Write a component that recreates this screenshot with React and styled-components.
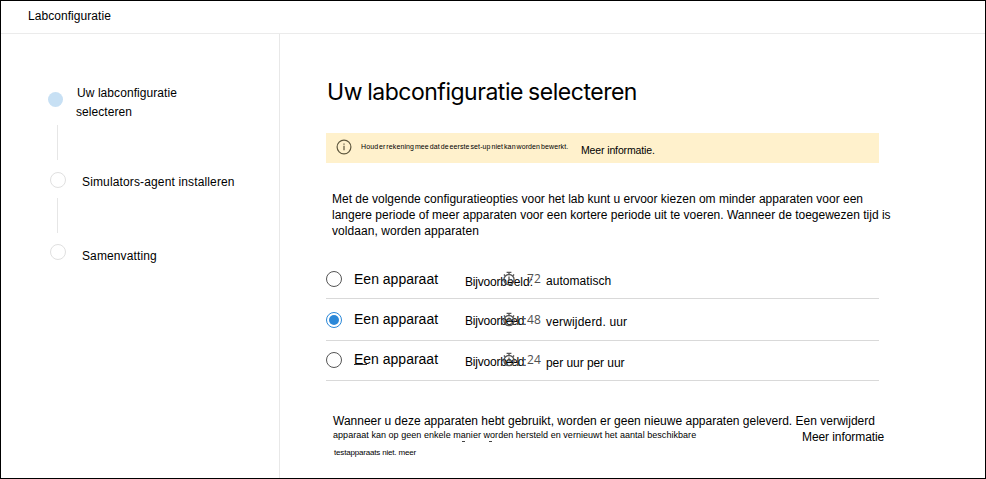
import React from "react";
import styled, { createGlobalStyle, css } from "styled-components";

const GlobalStyle = createGlobalStyle`
  *, *::before, *::after { box-sizing: border-box; }
  body {
    margin: 0;
    background: #fff;
    color: #000;
    font: 12px/16px "Liberation Sans", Arial, sans-serif;
  }
`;

const Frame = styled.div`
  display: flex;
  flex-direction: column;
  width: 986px;
  height: 479px;
  border: 1px solid #000;
  overflow: hidden;
  white-space: nowrap;
`;

const Header = styled.header`
  height: 33px;
  padding: 7px 0 0 27px;
  border-bottom: 1px solid #ebebeb;
  letter-spacing: 0.06px;
`;

const Body = styled.div`
  display: flex;
  flex: 1;
  min-height: 0;
`;

const Sidebar = styled.nav`
  display: flex;
  flex-direction: column;
  width: 279px;
  padding: 57px 0 0 47px;
  border-right: 1px solid #e8e8e8;
`;

const Step = styled.div`
  display: flex;
  align-items: flex-start;
  height: ${(p) => p.$height}px;
`;

const Marker = styled.div`
  display: flex;
  flex-direction: column;
  align-items: flex-start;
  width: 20px;
  flex: none;
`;

const Dot = styled.span`
  width: 16px;
  height: 16px;
  margin-left: 2px;
  border: 1.5px solid #e0e0e0;
  border-radius: 50%;
  ${(p) =>
    p.$active &&
    css`
      width: 15px;
      height: 15px;
      margin: 1px 0 0 0;
      border: 0;
      background: #c7e0f4;
    `}
`;

const Connector = styled.span`
  width: 1px;
  height: 35px;
  margin: ${(p) => p.$gap}px 0 0 9px;
  background: #e6e6e6;
`;

const StepLabel = styled.span`
  line-height: 19px;
  margin: ${(p) => p.$top}px 0 0 ${(p) => p.$left}px;
  letter-spacing: ${(p) => p.$tracking}px;
`;

const FirstLine = styled.span`
  display: block;
  padding-left: 1px;
`;

const Main = styled.main`
  display: flex;
  flex-direction: column;
  align-items: flex-start;
  padding: 42px 0 0 46px;
`;

const Title = styled.h1`
  margin: 0 0 0 1px;
  height: 57px;
  font: 400 23px/32px Inter, "Liberation Sans", sans-serif;
  letter-spacing: -0.48px;
  word-spacing: -0.8px;
`;

const Banner = styled.div`
  display: flex;
  align-items: flex-start;
  width: 553px;
  height: 30px;
  background: #fff1cc;

  svg { margin: 6px 0 0 10px; flex: none; }
`;

const BannerText = styled.span`
  width: 220px;
  margin: 6px 0 0 9px;
  font-size: 7px;
  word-spacing: -1.2px;
  letter-spacing: 0.11px;
`;

const BannerLink = styled.a`
  margin-top: 9px;
  font-size: 10.5px;
  letter-spacing: -0.13px;
`;

const Intro = styled.p`
  margin: 28px 0 0 6px;
`;

const Line = styled.span`
  display: block;
  letter-spacing: ${(p) => p.$tracking || 0}px;
`;

const Options = styled.div`
  width: 553px;
  margin-top: 21px;
`;

const Option = styled.label`
  display: flex;
  align-items: flex-start;
  height: ${(p) => p.$height}px;
  padding-top: ${(p) => p.$pad}px;
  border-bottom: 1px solid #d9d9d9;
`;

const Radio = styled.span`
  display: flex;
  align-items: center;
  justify-content: center;
  width: 16px;
  height: 16px;
  flex: none;
  border: 1.3px solid ${(p) => (p.$checked ? "#2b88d8" : "#555")};
  border-radius: 50%;

  &::after {
    content: "";
    width: 10px;
    height: 10px;
    border-radius: 50%;
    background: ${(p) => (p.$checked ? "#2b88d8" : "transparent")};
  }
`;

const OptionLabel = styled.span`
  width: 111px;
  margin: ${(p) => p.$top}px 0 0 12px;
  font-size: 14px;
`;

const Initial = styled.span`
  display: inline-block;
  width: 13px;
  height: 14px;
  line-height: 16px;
  margin-right: -3.7px;
  border-bottom: 1px solid #333;
  vertical-align: top;
`;

const Timing = styled.span`
  position: relative;
  width: 81px;
  padding-top: ${(p) => p.$top}px;
  letter-spacing: -0.2px;
`;

const Tail = styled.span`
  letter-spacing: ${(p) => p.$tracking}px;
`;

const Hours = styled.span`
  position: absolute;
  top: 0;
  left: 37px;
  display: flex;
  gap: 11px;
  color: #505050;
  font: 12px/16px "Open Sans", sans-serif;
  letter-spacing: 0.1px;
`;

const Result = styled.span`
  padding-top: ${(p) => p.$top}px;
  letter-spacing: ${(p) => p.$tracking}px;
`;

const Footer = styled.footer`
  display: grid;
  grid-template-columns: 469px auto;
  margin: 32px 0 0 7px;
`;

const FooterLead = styled.span`
  grid-column: 1 / -1;
`;

const FooterNote = styled.span`
  position: relative;
  font-size: 9px;
  line-height: 12px;
  letter-spacing: 0.04px;

  &::before, &::after {
    content: "";
    position: absolute;
    top: 12px;
    left: 129px;
    width: 3px;
    height: 1px;
    background: #444;
  }
  &::after { left: 156px; }
`;

const FooterLink = styled.a`
  letter-spacing: -0.08px;
`;

const FooterEnd = styled.span`
  margin: 2px 0 0 1px;
  font-size: 8px;
  line-height: 12px;
  letter-spacing: -0.18px;
`;

const InfoIcon = () => (
  <svg width="16" height="16" viewBox="0 0 16 16" fill="none" stroke="#5f583f">
    <circle cx="8" cy="8" r="6.9" strokeWidth="1.2" />
    <path d="M8 6.8v4.4M8 4.5v1.2" strokeWidth="1.2" />
  </svg>
);

const Stopwatch = () => (
  <svg width="14" height="16" viewBox="0 0 14 16" fill="none" stroke="#555" strokeWidth="1.3">
    <circle cx="7" cy="8.6" r="5.1" />
    <path d="M4.6 1.4h4.8M7 1.4v2.2M10.8 4.8l1.3-1.3M3.2 4.8L1.9 3.5M7 5.6v3.2h2.4" />
  </svg>
);

const OPTIONS = [
  { height: 39, pad: 11, label: 0, timing: 3, hours: "72", result: "automatisch", resultTop: 2, tracking: 0.05, tail: 0 },
  { height: 42, pad: 13, label: -1, timing: 1, hours: "48", result: "verwijderd. uur", resultTop: 2, tracking: 0.17, tail: -1.3, checked: true },
  { height: 40, pad: 11, label: -1, timing: 2, hours: "24", result: "per uur per uur", resultTop: 3, tracking: -0.06, tail: -1.3, underlined: true },
];

export default function App() {
  return (
    <>
      <GlobalStyle />
      <Frame>
        <Header>Labconfiguratie</Header>
        <Body>
          <Sidebar>
            <Step $height={81}>
              <Marker>
                <Dot $active />
                <Connector $gap={18} />
              </Marker>
              <StepLabel $top={-7} $left={8} $tracking={0.07}>
                <FirstLine>Uw labconfiguratie</FirstLine>
                selecteren
              </StepLabel>
            </Step>
            <Step $height={72}>
              <Marker>
                <Dot />
                <Connector $gap={10} />
              </Marker>
              <StepLabel $top={1} $left={14} $tracking={0.14}>Simulators-agent installeren</StepLabel>
            </Step>
            <Step $height={20}>
              <Marker>
                <Dot />
              </Marker>
              <StepLabel $top={3} $left={14} $tracking={0.12}>Samenvatting</StepLabel>
            </Step>
          </Sidebar>
          <Main>
            <Title>Uw labconfiguratie selecteren</Title>
            <Banner>
              <InfoIcon />
              <BannerText>Houd er rekening mee dat de eerste set-up niet kan worden bewerkt.</BannerText>
              <BannerLink>Meer informatie.</BannerLink>
            </Banner>
            <Intro>
              <Line>Met de volgende configuratieopties voor het lab kunt u ervoor kiezen om minder apparaten voor een</Line>
              <Line>langere periode of meer apparaten voor een kortere periode uit te voeren. Wanneer de toegewezen tijd is</Line>
              <Line $tracking={0.06}>voldaan, worden apparaten</Line>
            </Intro>
            <Options>
              {OPTIONS.map((o) => (
                <Option key={o.hours} $height={o.height} $pad={o.pad}>
                  <Radio $checked={o.checked} />
                  <OptionLabel $top={o.label}>
                    {o.underlined ? <Initial>E</Initial> : "E"}en apparaat
                  </OptionLabel>
                  <Timing $top={o.timing}>
                    Bijvoor<Tail $tracking={o.tail}>beeld:</Tail>
                    <Hours>
                      <Stopwatch />
                      {o.hours}
                    </Hours>
                  </Timing>
                  <Result $top={o.resultTop} $tracking={o.tracking}>{o.result}</Result>
                </Option>
              ))}
            </Options>
            <Footer>
              <FooterLead>
                Wanneer u deze apparaten hebt gebruikt, worden er geen nieuwe apparaten geleverd. Een verwijderd
              </FooterLead>
              <FooterNote>
                apparaat kan op geen enkele manier worden hersteld en vernieuwt het aantal beschikbare
              </FooterNote>
              <FooterLink>Meer informatie</FooterLink>
              <FooterEnd>testapparaats niet. meer</FooterEnd>
            </Footer>
          </Main>
        </Body>
      </Frame>
    </>
  );
}
